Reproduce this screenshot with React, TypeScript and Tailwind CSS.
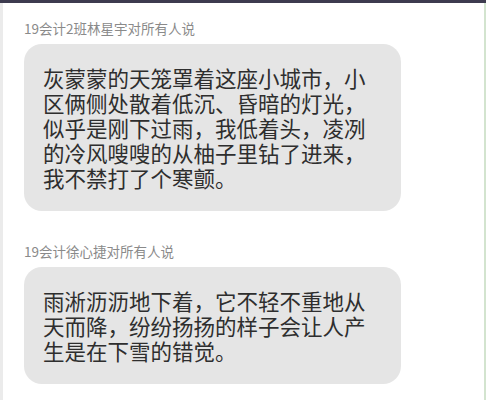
const messages = [
  {
    sender: "19会计2班林星宇对所有人说",
    text: "灰蒙蒙的天笼罩着这座小城市，小区俩侧处散着低沉、昏暗的灯光，似乎是刚下过雨，我低着头，凌冽的冷风嗖嗖的从柚子里钻了进来，我不禁打了个寒颤。",
  },
  {
    sender: "19会计徐心捷对所有人说",
    text: "雨淅沥沥地下着，它不轻不重地从天而降，纷纷扬扬的样子会让人产生是在下雪的错觉。",
  },
];

export default function App() {
  return (
    <div className="w-[486px] h-[400px] overflow-hidden bg-white flex flex-col font-['Noto_Sans_CJK_SC',sans-serif]">
      <div className="h-[3px] shrink-0 bg-[#3d3b4f]" />
      <div className="flex-1 border-l-[3px] border-l-[#ebebeb] border-r-2 border-r-[#d3e4cf] pl-[21px] pt-[16px]">
        {messages.map((m) => (
          <div key={m.sender} className="mb-[31px]">
            <div className="text-[13.5px] leading-[18px] text-[#8a8a8a]">{m.sender}</div>
            <div className="mt-[7px] w-[377px] rounded-[18px] bg-[#e5e5e5] pl-[19px] pr-[26px] py-[21px]">
              <p className="text-[21.5px] leading-[25px] text-[#2e2e2e]">{m.text}</p>
            </div>
          </div>
        ))}
      </div>
    </div>
  );
}
